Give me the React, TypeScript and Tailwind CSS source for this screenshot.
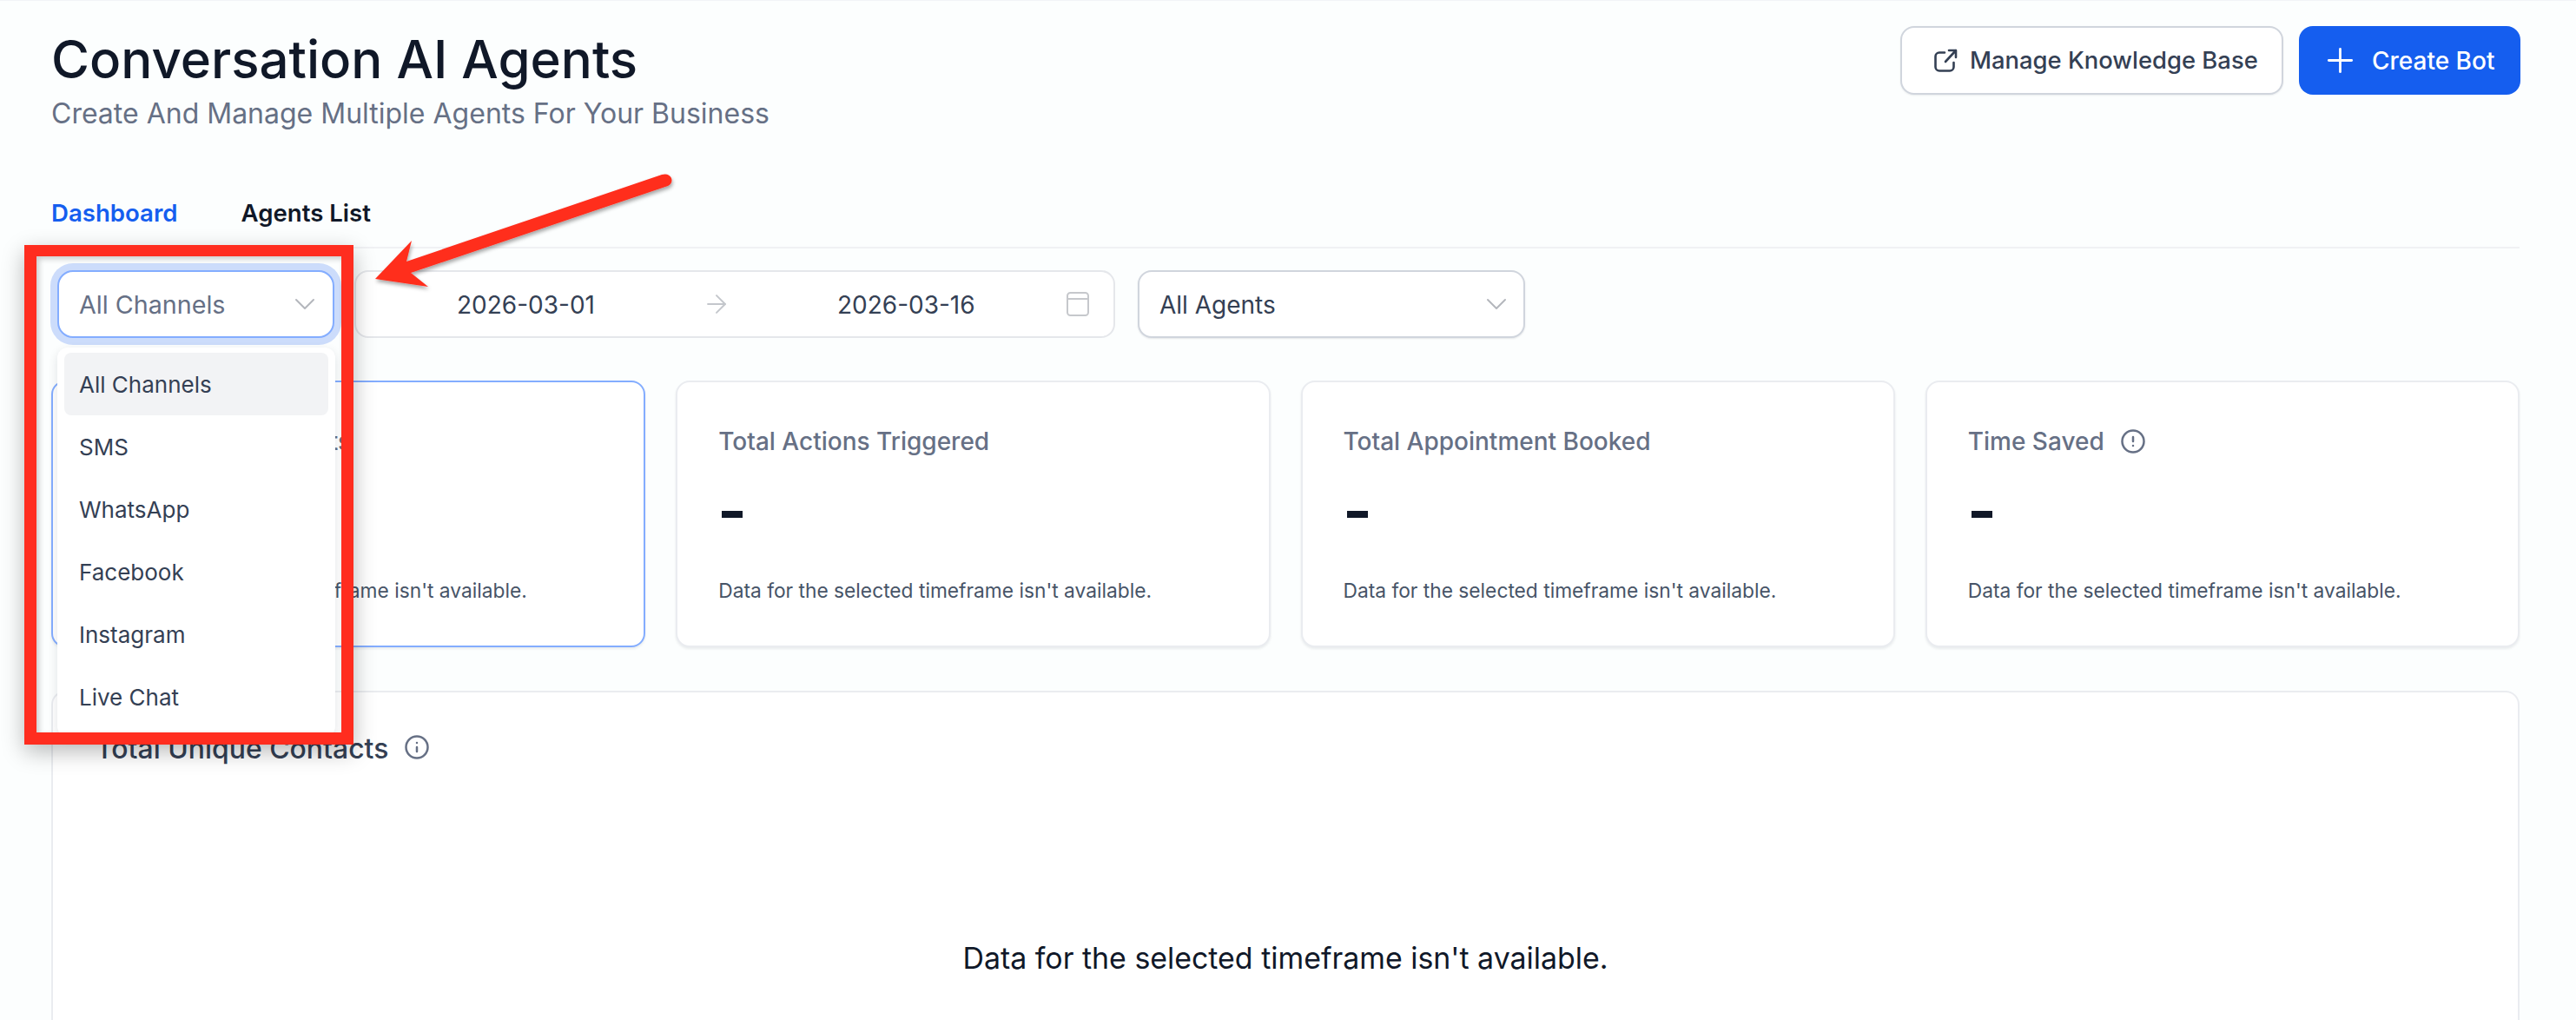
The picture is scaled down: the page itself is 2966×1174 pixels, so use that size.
import { Plus, ChevronDown, ArrowRight, Info, CircleAlert } from "lucide-react";

const font = "font-['Inter',sans-serif]";
const channels = ["All Channels", "SMS", "WhatsApp", "Facebook", "Instagram", "Live Chat"];
const emptyText = "Data for the selected timeframe isn't available.";

function CalendarGlyph() {
  return (
    <svg width="26" height="28" viewBox="0 0 26 28" fill="none" stroke="#c6c8cc" strokeWidth="2">
      <rect x="1" y="1" width="24" height="26" rx="3.5" />
      <path d="M1 8h24" />
    </svg>
  );
}

function ShareGlyph() {
  return (
    <svg width="30" height="30" viewBox="0 0 30 30" fill="none" stroke="#344054" strokeWidth="2.6" strokeLinecap="round" strokeLinejoin="round">
      <path d="M14 5.5H8A4.5 4.5 0 0 0 3.5 10V22A4.5 4.5 0 0 0 8 26.5H20A4.5 4.5 0 0 0 24.5 22V17" />
      <path d="M15 16 27 3M19 3H27V11" />
    </svg>
  );
}

function StatCard({ title, active, icon }: { title: string; active?: boolean; icon?: boolean }) {
  return (
    <div
      className={
        "flex h-[307px] flex-col rounded-2xl border-2 bg-white pl-[47px] pt-[53px] shadow-[0_2px_3px_rgba(16,24,40,0.08)] " +
        (active ? "border-[#84adff]" : "border-[#eaecf0]")
      }
    >
      <div className="flex h-[30px] items-center gap-[18px] text-[28px] font-medium text-[#667085]">
        {title}
        {icon && <CircleAlert size={30} strokeWidth={2} className="text-[#667085]" />}
      </div>
      <div className="ml-1 mt-[65px] h-2 w-6 bg-[#101828]" />
      <div className="mt-[69px] text-[22.75px] leading-[30px] text-[#475467]">{emptyText}</div>
    </div>
  );
}

export default function App() {
  return (
    <div className={"relative h-[1174px] overflow-hidden border-t border-[#f2f4f7] bg-[#fcfefe] " + font}>
      <div className="pl-[59px] pr-[65px] pt-[29px]">
        <div className="flex h-[121px] items-start justify-between">
          <div>
            <h1 className="text-[60px] font-medium leading-[76px] text-[#101828]">Conversation AI Agents</h1>
            <p className="mt-[5px] text-[32px] leading-[40px] text-[#667085]">Create And Manage Multiple Agents For Your Business</p>
          </div>
          <div className="-mr-[1px] flex gap-[18px]">
            <button className="flex h-[79px] w-[441px] items-center gap-[13px] rounded-2xl border-2 border-[#d0d5dd] bg-white pl-[35px] text-[27.4px] font-medium text-[#344054] shadow-[0_1px_2px_rgba(16,24,40,0.08)]">
              <ShareGlyph />
              Manage Knowledge Base
            </button>
            <button className="flex h-[79px] w-[255px] items-center gap-[14px] rounded-2xl bg-[#155eef] pl-[25px] text-[28px] font-medium text-white">
              <Plus size={45} strokeWidth={1.5} />
              Create Bot
            </button>
          </div>
        </div>

        <div className="mt-[77px] flex h-[58px] gap-[73px] border-b-2 border-[#f0f1f4] text-[27.6px] font-semibold leading-[34px]">
          <span className="text-[#155eef]">Dashboard</span>
          <span className="text-[#101828]">Agents List</span>
        </div>

        <div className="mt-[25px] flex items-center gap-[26px] pl-[7px]">
          <div className="flex h-[78px] w-[319px] items-center justify-between rounded-[18px] border-2 border-[#84adff] bg-white pl-[23px] pr-[12px] text-[28.7px] text-[#667085] shadow-[0_0_0_8px_#ccdcfb]">
            <span className="mt-[2px]">All Channels</span>
            <ChevronDown size={40} strokeWidth={1.2} className="text-[#b4b7bd]" />
          </div>
          <div className="-ml-[3px] flex h-[78px] w-[876px] items-center rounded-2xl border-2 border-[#e5e7eb] bg-white pr-[28px] text-[28px] text-[#344054]">
            <span className="ml-[116px] mt-[2px]">2026-03-01</span>
            <ArrowRight size={34} strokeWidth={1.4} className="ml-[123px] text-[#c4c7cc]" />
            <span className="ml-[122px] mt-[2px]">2026-03-16</span>
            <span className="ml-auto">
              <CalendarGlyph />
            </span>
          </div>
          <div className="flex h-[78px] w-[446px] items-center justify-between rounded-2xl border-2 border-[#d0d5dd] bg-white pl-[23px] pr-[11px] text-[28px] text-[#344054] shadow-[0_1px_2px_rgba(16,24,40,0.1)]">
            <span className="mt-[2px]">All Agents</span>
            <ChevronDown size={40} strokeWidth={1.2} className="text-[#b4b7bd]" />
          </div>
        </div>

        <div className="mt-[49px] grid grid-cols-4 gap-[35px]">
          <StatCard title="Total Unique Contacts" active />
          <StatCard title="Total Actions Triggered" />
          <StatCard title="Total Appointment Booked" />
          <StatCard title="Time Saved" icon />
        </div>

        <div className="mt-[50px] h-[500px] rounded-2xl border-2 border-[#eaecf0] bg-white">
          <div className="flex items-center gap-[18px] pl-[49px] pt-[47px] text-[31.9px] font-medium leading-[36px] text-[#344054]">
            Total Unique Contacts
            <Info size={30} strokeWidth={2} className="-mt-1 text-[#667085]" />
          </div>
          <div className="mt-[201px] text-center text-[33.9px] leading-[44px] text-[#101828]">{emptyText}</div>
        </div>
      </div>

      {/* open dropdown */}
      <div className="absolute left-[66px] top-[399px] flex h-[448px] w-[320px] flex-col rounded-xl bg-white p-[6px_8px] text-[26px] text-[#344054] shadow-[0_4px_12px_rgba(16,24,40,0.12)]">
        {channels.map((c, i) => (
          <div
            key={c}
            className={"flex h-[72px] shrink-0 items-center rounded-lg px-[17px] " + (i === 0 ? "bg-[#f2f3f5]" : "")}
          >
            {c}
          </div>
        ))}
      </div>

      {/* red annotation */}
      <div className="absolute left-[28px] top-[281px] h-[575px] w-[379px] border-x-[14px] border-b-[14px] border-t-[13px] border-[#ff2d1f] shadow-[0_8px_24px_rgba(0,0,0,0.28),inset_3px_3px_6px_rgba(0,0,0,0.2)]" />
      <svg className="absolute left-[420px] top-[194px]" width="370" height="150" viewBox="420 195 370 150" fill="none">
        <defs>
          <filter id="s" x="-10%" y="-20%" width="120%" height="150%">
            <feDropShadow dx="1" dy="3" stdDeviation="2" floodColor="#000" floodOpacity="0.35" />
          </filter>
        </defs>
        <path
          filter="url(#s)"
          d="M432 321 474 277 468 301 762 201Q770 199 773 205 775 211 769 214L473 314 493 330Z"
          fill="#ff2d1f"
        />
      </svg>
    </div>
  );
}
